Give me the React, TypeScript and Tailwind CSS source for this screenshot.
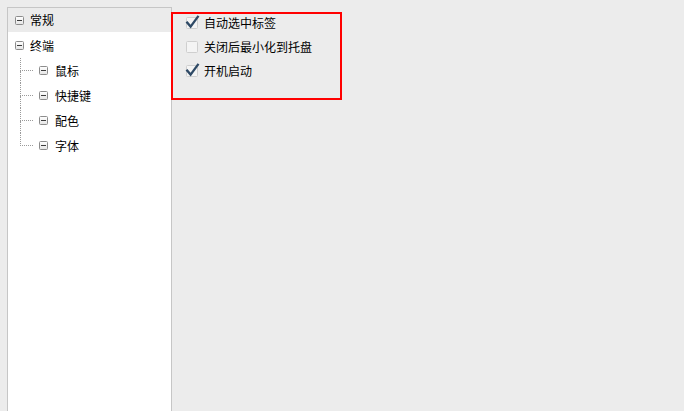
import React from "react";

const font = { fontFamily: '"Noto Sans CJK SC", "Noto Sans", sans-serif' };

function Minus() {
  return (
    <svg width="9" height="9" viewBox="0 0 9 9" className="shrink-0">
      <defs>
        <linearGradient id="mg" x1="0" y1="0" x2="0" y2="1">
          <stop offset="0" stopColor="#ffffff" />
          <stop offset="1" stopColor="#e4e4e4" />
        </linearGradient>
      </defs>
      <rect x="0.5" y="0.5" width="8" height="8" rx="1" fill="url(#mg)" stroke="#8c8c8c" />
      <line x1="2" y1="4.5" x2="7" y2="4.5" stroke="#3c3c3c" />
    </svg>
  );
}

function Check({ checked }: { checked: boolean }) {
  return (
    <svg width="16" height="16" viewBox="0 0 16 16" className="shrink-0">
      <rect x="1.5" y="2.5" width="11" height="11" rx="1" fill="#f4f4f4" stroke="#cfcfcf" />
      {checked && (
        <path d="M2.2 7.6 L5.6 11.6 L12.8 1.8" fill="none" stroke="#2f4a66" strokeWidth="2.3" strokeLinecap="square" />
      )}
    </svg>
  );
}

const children = ["鼠标", "快捷键", "配色", "字体"];

export default function App() {
  return (
    <div className="w-[684px] h-[411px] bg-[#ececec] relative flex pt-[7px] pl-[7px] overflow-hidden text-[12px] text-black" style={font}>
      <div className="w-[165px] h-[404px] bg-white border border-b-0 border-[#c6c6c6] shrink-0">
        <div className="h-[24px] mb-px bg-[#ebebeb] flex items-center pl-[7px] gap-[6px]">
          <Minus />
          <span className="leading-none">常规</span>
        </div>
        <div className="h-[25px] flex items-center pl-[7px] gap-[6px]">
          <Minus />
          <span className="leading-none">终端</span>
        </div>
        {children.map((c, i) => (
          <div key={c} className="h-[25px] flex items-stretch">
            <div className="ml-[12px] w-[13px] flex flex-col shrink-0">
              <div className="h-[13px] border-l border-b border-dotted border-[#9a9a9a]" />
              {i < children.length - 1 && <div className="flex-1 border-l border-dotted border-[#9a9a9a]" />}
            </div>
            <div className="flex items-center ml-[6px] gap-[7px]">
              <Minus />
              <span className="leading-none">{c}</span>
            </div>
          </div>
        ))}
      </div>
      <div className="flex flex-col pt-[4px] ml-[13px]">
        {[
          ["自动选中标签", true],
          ["关闭后最小化到托盘", false],
          ["开机启动", true],
        ].map(([t, c]) => (
          <div key={t as string} className="h-[24px] flex items-center gap-[3px]">
            <Check checked={c as boolean} />
            <span className="leading-none">{t as string}</span>
          </div>
        ))}
      </div>
      <div className="absolute left-[171px] top-[12px] w-[171px] h-[88px] border-2 border-[#ff0000]" />
    </div>
  );
}
